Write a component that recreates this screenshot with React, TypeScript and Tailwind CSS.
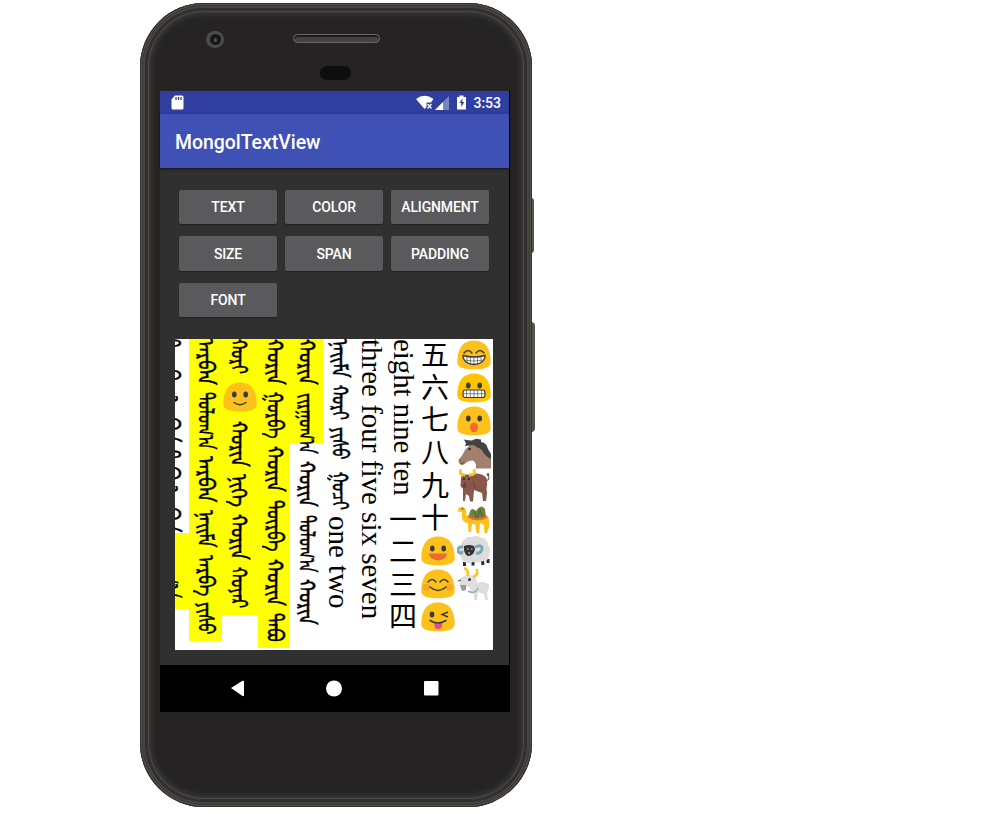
import React, { useLayoutEffect, useRef } from 'react';

type Run = { t: string; h: number; len?: number };

const columns: { w: string; runs: Run[] }[] = [
  { w: 'w-[33px]', runs: [
    { t: 'ᠠᠷᠪᠠᠨ', h: 53, len: 46 }, { t: 'ᠳᠣᠯᠣᠭ᠎ᠠ', h: 64, len: 57 }, { t: 'ᠠᠷᠪᠠᠨ', h: 54, len: 47 },
    { t: 'ᠨᠠᠢᠮᠠ', h: 45, len: 38 }, { t: 'ᠠᠷᠪᠠ', h: 47, len: 41 }, { t: 'ᠶᠢᠰᠦ', h: 39, len: 33 } ] },
  { w: 'w-[36px]', runs: [
    { t: 'ᠬᠣᠷᠢ', h: 42, len: 35 }, { t: 'smile', h: 40 }, { t: 'ᠬᠣᠷᠢᠨ', h: 53, len: 46 },
    { t: 'ᠨᠢᠭᠡ', h: 40, len: 33 }, { t: 'ᠬᠣᠷᠢᠨ', h: 53, len: 46 }, { t: 'ᠬᠣᠶᠠᠷ', h: 48, len: 41 } ] },
  { w: 'w-[32px]', runs: [
    { t: 'ᠬᠣᠷᠢᠨ', h: 53, len: 46 }, { t: 'ᠭᠤᠷᠪᠠ', h: 54, len: 47 }, { t: 'ᠬᠣᠷᠢᠨ', h: 54, len: 46 },
    { t: 'ᠳᠥᠷᠪᠡ', h: 59, len: 52 }, { t: 'ᠬᠣᠷᠢᠨ', h: 54, len: 47 }, { t: 'ᠲᠠᠪᠤ', h: 35, len: 29 } ] },
];

const skin = '#fcc21b';
const ink = '#3b3b3b';

function Face({ kind }: { kind: string }) {
  return (
    <svg viewBox="0 0 34 30" className="block h-[30px] w-[34px] shrink-0">
      <path d="M.3 22C.3 8 6 .5 17 .5S33.700 8 33.700 22C33.700 27 29 29.300 17 29.300S.3 27 .3 22Z" fill={kind === 'grimace' ? '#ffc400' : skin} />
      {(kind === 'smile' || kind === 'open' || kind === 'grimace' || kind === 'wow') && (
        <g fill={ink}><ellipse cx="11.300" cy="12.500" rx="2.300" ry="2.900" /><ellipse cx="22.700" cy="12.500" rx="2.300" ry="2.900" /></g>
      )}
      {kind === 'smile' && <path d="M11 20.500q6 4.500 12 0" stroke={ink} strokeWidth="1.500" fill="none" strokeLinecap="round" />}
      {kind === 'open' && <path d="M8 17.500h18c0 9-18 9-18 0Z" fill="#ed6c30" />}
      {(kind === 'grin' || kind === 'blush') && <path d="M7 13q4-5 8 0M19 13q4-5 8 0" stroke={ink} strokeWidth="1.500" fill="none" strokeLinecap="round" />}
      {kind === 'blush' && <g><circle cx="5.500" cy="18.500" r="3.800" fill="#f79329" opacity=".55" /><circle cx="28.500" cy="18.500" r="3.800" fill="#f79329" opacity=".55" /><path d="M9 18q8 7 16 0" stroke={ink} strokeWidth="1.500" fill="none" strokeLinecap="round" /></g>}
      {kind === 'grin' && <g><path d="M6 15.500q11 3 22 0c0 12-22 12-22 0Z" fill="#fff" stroke={ink} strokeWidth="1.300" /><path d="M7 20q10 2 20 0M10 17v5.500M13.500 17v7M17 17v7M20.500 17v7M24 17v5.500" stroke={ink} strokeWidth=".6" fill="none" /></g>}
      {kind === 'grimace' && <g><rect x="6" y="17" width="22" height="7.500" rx="2.500" fill="#fff" stroke={ink} strokeWidth="1.200" /><path d="M6 20.700h22M9.500 17v7M13.200 17v7M17 17v7M20.700 17v7M24.500 17v7" stroke={ink} strokeWidth=".6" /></g>}
      {kind === 'wow' && <ellipse cx="17" cy="21.500" rx="4" ry="4.800" fill="#ed6c30" />}
      {kind === 'wink' && <g><ellipse cx="11" cy="12.500" rx="2.300" ry="2.900" fill={ink} /><path d="M27 10l-6 2.500 6 2.500" stroke={ink} strokeWidth="1.400" fill="none" /><path d="M13.500 21h7.500v2.500a3.700 3.700 0 0 1-7.500 0Z" fill="#e0508c" /><path d="M9 18.500q8 5 16 0" stroke={ink} strokeWidth="1.500" fill="none" strokeLinecap="round" /></g>}
    </svg>
  );
}

function Animal({ kind }: { kind: string }) {
  return (
    <svg viewBox="0 0 34 33" className="block h-[33px] w-[34px] shrink-0">
      {kind === 'horse' && <g>
        <path d="M12 8Q17 4 23 8Q30 13 34 21V30.500H18.500Q20.500 26 16 22.500Q12 22 8.500 25Q7 27.500 4.500 27Q1.500 26 1.500 22Q6 17 8 12Z" fill="#a1806d" />
        <path d="M7 1.500Q12 2.500 15 2.500Q19 0 20.500 1L24 1.500L24 4Q29 4 31 11L34 16V21Q29 19 26 14Q24 10 20 9.500Q17 6 13 7.500L8 8L9 5.500Z" fill="#434343" />
        <circle cx="12.500" cy="11" r="1.200" fill="#222" /><path d="M2.500 22l1.500.5M3.500 25.500q2 0 4-1.500" stroke="#5e473b" strokeWidth="1" fill="none" />
      </g>}
      {kind === 'ox' && <g>
        <path d="M5 6Q10 5 14 6Q19 3 26 6Q31 8 30 16Q29 20 30 24L29 32H26L25 24L17 21L16 32.500H13L12 27L9 25L8 32H6L6 20L3.500 17L4 9Z" fill="#8a574b" />
        <path d="M8 13L10 18 8 19L5 17ZM15 11Q19 16 18 21" fill="#6d4039" />
        <path d="M4 .5Q1.500 6 8 6M12 6Q20 6 16.500.5" stroke="#fcc21b" strokeWidth="2.800" fill="none" /><path d="M28 12Q34 11 31 6" stroke="#8a574b" strokeWidth="1.200" fill="none" /><circle cx="31" cy="5.500" r="1.200" fill="#543" /><circle cx="7" cy="10" r=".9" fill="#222" /><circle cx="12" cy="10" r=".9" fill="#222" />
      </g>}
      {kind === 'camel' && <g>
        <path d="M1 7Q4 3 8 6Q10 8 9 14Q14 11 19 13Q27 10 31 15Q33 18 32 25L30 31H27.500L27 23L23 21L22 31H19.500L18 22L15 22L14 30H11.500L11 21Q5 21 5 14L5 10L1 9.500Z" fill="#fcc21b" />
        <path d="M12 14Q13 3 19 9Q24 1 28 7L29 15Q20 21 12 14Z" fill="#76803d" /><path d="M17 9L20 17L23 7L26 16" stroke="#4d6b30" strokeWidth="1.200" fill="none" /><path d="M11 14.500Q20 20 30 14.500" stroke="#ed6c30" strokeWidth="2.200" fill="none" /><circle cx="5.500" cy="7" r=".8" fill="#333" />
      </g>}
      {kind === 'sheep' && <g>
        <path d="M7.500 27v4M16 26v4.500M25.500 26l.5 4M31 24v4" stroke="#2b2b2b" strokeWidth="3" />
        <path d="M7 5Q10 1 15 2Q20-.5 25 3Q31 4 31 10Q35 16 32 20Q32 26 26 26Q21 29 16 27Q10 30 6 26Q3 23 4 19Q2 14 4 11Q4 7 7 5Z" fill="#dcdcdc" />
        <path d="M7 11Q12 9 17 11L18 14Q17 21 11 21Q8 20 7 15Z" fill="#333" /><path d="M10 14h1.500M14 14h1.500M11 18h2" stroke="#ddd" strokeWidth="1.200" />
        <path d="M6 12Q0 11 1.500 17Q4 20 5.500 16M18 12Q25 9 25 14Q24 19 19 18" stroke="#78a7b5" strokeWidth="2.900" fill="none" />
      </g>}
      {kind === 'goat' && <g>
        <path d="M2 13Q6 8 13 8Q20 9 20 16Q25 14 29 16L32 17V22L30 25L31 33H28L27 27L21 25L20 33H17L17 25Q13 24 12 20L2 18Z" fill="#dedede" />
        <path d="M10.500 9Q12 3 7 1M16 10Q22 8 19.500 2" stroke="#fcc21b" strokeWidth="2.500" fill="none" /><path d="M3 18L5 24L9 23V18Z" fill="#999" /><circle cx="12.500" cy="12.500" r="1.500" fill="#333" /><path d="M1 14l3-1" stroke="#555" strokeWidth="1.200" /><path d="M11 24Q18 28 21 21" stroke="#8fb3c2" strokeWidth="1.800" fill="none" />
      </g>}
    </svg>
  );
}

/** One vertical word; it is fitted along the line when `len` is given. */
function Word({ t, h, len }: Run) {
  const ref = useRef<HTMLSpanElement>(null);
  useLayoutEffect(() => {
    const el = ref.current;
    if (el && len) el.style.transform = `scaleY(${len / el.offsetHeight})`;
  }, [len]);
  if (t === 'smile') return <div className="flex items-start justify-center pt-px" style={{ height: h }}><Face kind="smile" /></div>;
  return (
    <div className="whitespace-nowrap [writing-mode:vertical-lr]" style={{ height: h }}>
      <span ref={ref} className={len ? 'inline-block origin-top text-[23px] [-webkit-text-stroke:0.5px_black]' : ''}>{t}</span>
    </div>
  );
}

function Key({ label }: { label: string }) {
  return <button className="h-[34.600px] rounded-[2px] bg-[#5a5a5c] pt-[2px] text-[14px] font-medium tracking-[-0.01em] text-white shadow-[0_1px_1px_#222]">{label}</button>;
}

export default function App() {
  return (
    <div className="h-[814px] w-[1000px] overflow-hidden bg-white pt-[3px] pl-[140px] font-[Roboto,sans-serif]">
      <div className="relative h-[804px] w-[392px]">
        <div className="absolute top-[195px] right-[-2px] h-[55px] w-[3px] rounded-r bg-[#55514e]" />
        <div className="absolute top-[319px] right-[-3px] h-[110px] w-[4px] rounded-r bg-[#55514e]" />
        <div className="relative h-full rounded-[64px] bg-[#47433f] p-[5px] shadow-[inset_0_0_0_1px_#33302d,inset_0_0_0_2px_#55514d,inset_0_0_0_3px_#3a3633]">
          <div className="h-full rounded-[59px] bg-[#302d2c] p-[2px]">
            <div className="h-full rounded-[57px] bg-[#252323] px-[13px] shadow-[inset_0_0_0_1px_#343231,inset_0_0_0_2px_#4d4b49,inset_0_0_4px_4px_#383737,inset_0_0_9px_5px_#302f2f]">
              <div className="relative flex h-[81px] justify-center pt-[24px]">
                <div className="absolute top-[21px] left-[46px] flex h-[17px] w-[18px] items-center justify-center rounded-full bg-[#4d4b4b]"><div className="flex h-[11px] w-[11px] items-center justify-center rounded-full bg-[#171717]"><div className="h-[4px] w-[3px] rounded-full bg-[#555]" /></div></div>
                <div className="h-[9px] w-[87px] rounded-full border border-[#6a6766] bg-[#454241] shadow-[inset_0_2px_0_#1b1919]" />
                <div className="absolute top-[56px] left-[160px] h-[14px] w-[31px] rounded-full bg-[#0e0e0e]" />
              </div>
              <div className="flex h-[621px] w-[350px] flex-col border-r border-black bg-[#303030]">
                <div className="flex h-[23px] shrink-0 items-center bg-[#303f9f] pr-[8px] pl-[11px] text-white">
                  <svg viewBox="0 0 13 15" className="h-[15px] w-[13px]"><path d="M4 .5h7q1.500 0 1.500 1.500v11q0 1.500-1.500 1.500H2Q.5 14.500.5 13V4.500Z" fill="#fff" /><path d="M5 2v3M7.500 2v3M10 2v3" stroke="#303f9f" strokeWidth="1.300" /></svg>
                  <svg viewBox="0 0 18 15" className="ml-auto h-[15px] w-[18px]"><path d="M0 4Q8.500-2.500 17.500 4L15 7.500H10.500V12L8.500 14Z" fill="#fff" /><path d="M11.500 9l4 4.500m0-4.500l-4 4.500" stroke="#fff" strokeWidth="1.300" /></svg>
                  <svg viewBox="0 0 14 14" className="ml-px h-[14px] w-[14px]"><path d="M0 14L14 0V14Z" fill="#7983c6" /><path d="M0 14L8 6V14Z" fill="#fff" /></svg>
                  <svg viewBox="0 0 9 15" className="ml-[8px] h-[15px] w-[9px]"><path d="M0 2h2.500V.5h4V2H9v12.500H0Z" fill="#fff" /><path d="M5.500 3.500L2.300 8h2v4l3-5h-2Z" fill="#303f9f" /></svg>
                  <span className="ml-[7px] pt-px text-[14px] font-medium">3:53</span>
                </div>
                <div className="flex h-[54px] shrink-0 items-center bg-[#3f51b5] pt-[3px] pl-[15px] text-[19.400px] font-medium text-white shadow-[0_1px_2px_#111]">MongolTextView</div>
                <div className="mt-[21.500px] ml-[19px] grid w-[310px] grid-cols-3 gap-x-2 gap-y-3">
                  {['TEXT', 'COLOR', 'ALIGNMENT', 'SIZE', 'SPAN', 'PADDING', 'FONT'].map(l => <Key key={l} label={l} />)}
                </div>
                <div className="mt-[21.700px] ml-[15px] flex h-[311px] w-[318px] shrink-0 overflow-hidden bg-white font-['Liberation_Serif','Noto_Sans_CJK_SC',serif] text-[28px] leading-[32px] text-black">
                  <div className="flex w-[14px] shrink-0 justify-end overflow-hidden bg-[linear-gradient(#fff_194px,#ff0_194px,#ff0_270px,#fff_270px)]">
                    <div className="w-[35px] shrink-0">
                      <Word t="ᠳᠥᠷᠪᠡ" h={57} len={50} /><Word t="ᠠᠷᠪᠠᠨ" h={54} len={47} /><Word t="ᠲᠠᠪᠤ" h={36} len={30} /><Word t="ᠠᠷᠪᠠᠨ" h={54} len={47} /><Word t="ᠵᠢᠷᠭᠤᠭ᠎ᠠ" h={64} len={58} />
                    </div>
                  </div>
                  {columns.map((c, i) => <div key={i} className={`${c.w} shrink-0 self-start bg-[#ff0]`}>{c.runs.map((r, j) => <Word key={j} {...r} />)}</div>)}
                  <div className="w-[33px] shrink-0">
                    <div className="h-[104px] bg-[#ff0]"><Word t="ᠬᠣᠷᠢᠨ" h={54} len={46} /><Word t="ᠵᠢᠷᠭᠤᠭ᠎ᠠ" h={50} len={61} /></div>
                    <div className="pt-[18px]"><Word t="ᠬᠣᠷᠢᠨ" h={54} len={46} /><Word t="ᠳᠣᠯᠣᠭ᠎ᠠ" h={64} len={57} /><Word t="ᠬᠣᠷᠢᠨ" h={50} len={46} /></div>
                  </div>
                  <div className="w-[33px] shrink-0">
                    <Word t="ᠨᠠᠢᠮᠠ" h={46} len={39} /><Word t="ᠬᠣᠷᠢ" h={42} len={35} /><Word t="ᠶᠢᠰᠦ" h={45} len={33} /><Word t="ᠭᠤᠴᠢ" h={44} len={38} /><div className="text-[29px]"><Word t="one two" h={95} /></div>
                  </div>
                  <div className="w-[32px] shrink-0 text-[29px]"><Word t="three four five six seven" h={300} /></div>
                  <div className="w-[31px] shrink-0">
                    <div className="text-[28.800px]"><Word t="eight nine ten" h={164} /></div>
                    {['一', '二', '三', '四'].map(c => <div key={c} className="-ml-px h-[32.500px] text-center font-['Noto_Sans_CJK_SC',sans-serif] leading-[30px]">{c}</div>)}
                  </div>
                  <div className="w-[38px] shrink-0">
                    {['五', '六', '七', '八', '九', '十'].map(c => <div key={c} className="h-[32.700px] pr-[6px] text-center font-['Noto_Sans_CJK_SC',sans-serif] leading-[28px]">{c}</div>)}
                    <div className="flex flex-col gap-[3px] pt-[0.500px] pl-[2px]"><Face kind="open" /><Face kind="blush" /><Face kind="wink" /></div>
                  </div>
                  <div className="flex shrink-0 flex-col pt-[1px]">
                    <div className="flex flex-col gap-[3px]"><Face kind="grin" /><Face kind="grimace" /><Face kind="wow" /></div>
                    <div className="mt-[2px] flex flex-col"><Animal kind="horse" /><div className="-mt-[2px]"><Animal kind="ox" /></div><Animal kind="camel" /><Animal kind="sheep" /><div className="-mt-px"><Animal kind="goat" /></div></div>
                  </div>
                </div>
                <div className="mt-auto flex h-[47px] w-[350px] shrink-0 items-center bg-black">
                  <svg viewBox="0 0 350 47" className="h-[47px] w-[350px]" fill="#fff"><path d="M71 23L82.500 15.800Q84 15.500 84 16.500V30Q84 31.500 82.500 31Z" /><circle cx="174" cy="23.500" r="8" /><rect x="264" y="16" width="14.500" height="14.500" rx="1" /></svg>
                </div>
              </div>
            </div>
          </div>
        </div>
      </div>
    </div>
  );
}
